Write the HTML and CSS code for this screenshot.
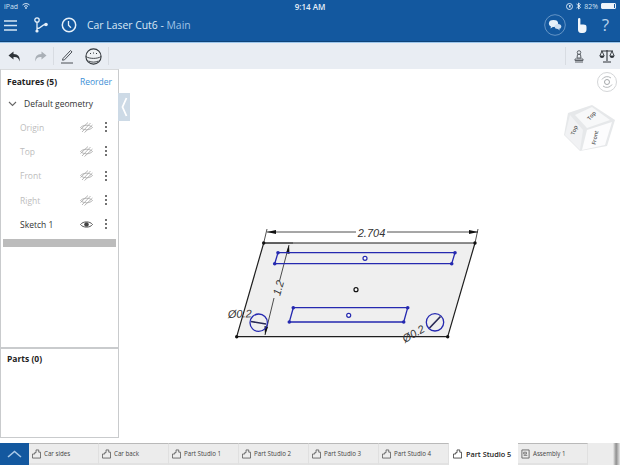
FILE: index.html
```html
<!DOCTYPE html>
<html lang="en">
<head>
<meta charset="utf-8">
<title>Car Laser Cut6 - Main</title>
<link rel="stylesheet" href="styles.css">
</head>
<body>
<div class="app">
  <header class="header">
    <div class="status">
      <div class="status-left">iPad
        <svg class="wifi" width="8" height="6" viewBox="0 0 8 6"><path d="M0.5 2a5 5 0 0 1 7 0M2 3.5a3 3 0 0 1 4 0" fill="none" stroke="#cfe0f2" stroke-width="1"/><circle cx="4" cy="5" r="0.9" fill="#cfe0f2"/></svg>
      </div>
      <div class="status-time">9:14 AM</div>
      <div class="status-right">
        <svg width="7" height="7" viewBox="0 0 7 7"><circle cx="3.5" cy="3.5" r="3" fill="none" stroke="#cfe0f2"/><rect x="3" y="2" width="1.6" height="2.5" fill="#cfe0f2"/></svg>
        <svg width="5" height="8" viewBox="0 0 5 8"><path d="M0.5 2l4 3.4L2.5 7V1l2 1.6L0.5 6" fill="none" stroke="#e2ecf6" stroke-width="0.9"/></svg>
        <span>82%</span>
        <span class="battery"><span class="battery-fill"></span></span>
      </div>
    </div>
    <div class="appbar">
      <svg class="ic-menu" width="13" height="11" viewBox="0 0 13 11"><path d="M0 1h13M0 5.5h13M0 10h13" stroke="#d6e6f5" stroke-width="1.5"/></svg>
      <svg class="ic-branch" width="14" height="16" viewBox="0 0 14 16"><circle cx="3" cy="3" r="2.2" fill="none" stroke="#e6f0f9" stroke-width="1.3"/><circle cx="3" cy="14" r="1.6" fill="#e6f0f9"/><circle cx="12" cy="7.5" r="1.8" fill="#e6f0f9"/><path d="M3 5v8M3 11.5c4 0 4.500-3.500 8-4" fill="none" stroke="#e6f0f9" stroke-width="1.3"/></svg>
      <svg class="ic-clock" width="16" height="16" viewBox="0 0 16 16"><circle cx="8" cy="8" r="6.700" fill="none" stroke="#e6f0f9" stroke-width="1.500"/><path d="M7.500 4v4.300l2.500 2.500" fill="none" stroke="#e6f0f9" stroke-width="1.300"/></svg>
      <div class="doc-title"><b>Car Laser Cut6 -</b> Main</div>
      <div class="appbar-right">
        <svg width="22" height="22" viewBox="0 0 22 22"><circle cx="11" cy="11" r="10.300" fill="none" stroke="#6d9bc9" stroke-width="0.900"/><ellipse cx="9.500" cy="9.500" rx="4.600" ry="3.400" fill="#e6f0f9"/><path d="M7 12l-0.500 2.500L9.500 12.500z" fill="#e6f0f9"/><ellipse cx="14" cy="12.500" rx="3.300" ry="2.500" fill="#cfe0f2"/><path d="M15 14.500l1 2-3-2z" fill="#cfe0f2"/></svg>
        <svg class="ic-hand" width="10" height="15" viewBox="0 0 10 15"><path d="M1 1.300a1.200 1.200 0 0 1 2.400 0V6.500h3c2 0 3.100 .7 3.100 2.500v2.500c0 2-1.300 3.500-3.500 3.500H4C2 15 1 13.500 1 11.500z" fill="#f1f6fb"/></svg>
        <span class="help">?</span>
      </div>
    </div>
  </header>

  <nav class="toolbar">
    <svg width="13" height="11" viewBox="0 0 13 11"><path d="M5.500 0.500L0.500 4.500l5 4V6c3.500-.3 5.500 1 6 4.500 1-4.500-1.500-7.500-6-7.500z" fill="#2e3338"/></svg>
    <svg class="tool-redo" width="13" height="11" viewBox="0 0 13 11"><path d="M7.500 0.500l5 4-5 4V6c-3.500-.3-5.500 1-6 4.500-1-4.500 1.500-7.500 6-7.500z" fill="#a9afb6"/></svg>
    <span class="tool-sep"></span>
    <svg class="tool-pencil" width="15" height="15" viewBox="0 0 15 15"><path d="M3 9.500L10.500 1.500l1.500 1.400L4.500 10.800 2.500 11.200zM1 14h12" fill="none" stroke="#4a4f55" stroke-width="1"/></svg>
    <svg class="tool-sphere" width="17" height="17" viewBox="0 0 17 17"><circle cx="8.500" cy="8.500" r="7.600" fill="#eef1f4" stroke="#33383d" stroke-width="1.100"/><path d="M1 8.500c3 2.500 12 2.500 15 0M3.500 13c3 1.500 7 1.500 10 0" fill="none" stroke="#33383d" stroke-width="0.900"/><path d="M5 5.500h1M8 5h1M11 5.500h1" stroke="#33383d" stroke-width="1"/></svg>
    <span class="tool-sep tool-sep-mid"></span>
    <span class="tool-sep tool-sep-last"></span>
    <svg class="tool-stamp" width="10" height="13" viewBox="0 0 10 13"><circle cx="5" cy="2.500" r="1.800" fill="none" stroke="#5c6167"/><path d="M3.500 4.500h3l.5 3.500H3z" fill="none" stroke="#5c6167"/><path d="M1 9h8v1.500H1zM1 12h8" fill="none" stroke="#5c6167"/></svg>
    <svg class="tool-scales" width="16" height="14" viewBox="0 0 16 14"><path d="M8 1v11M4 13h8M2 2h12" fill="none" stroke="#2e3338" stroke-width="1.100"/><path d="M3 2L0.800 7h4.400zM13 2l-2.200 5h4.400z" fill="none" stroke="#2e3338" stroke-width="0.900"/><path d="M0.800 7a2.200 2 0 0 0 4.400 0zM10.800 7a2.200 2 0 0 0 4.400 0z" fill="#2e3338"/></svg>
  </nav>

  <main class="workspace">
    <aside class="panel">
      <section class="features">
        <div class="features-head"><strong>Features (5)</strong><span class="reorder">Reorder</span></div>
        <div class="group"><svg width="9" height="6" viewBox="0 0 9 6"><path d="M1 1l3.500 3.500L8 1" fill="none" stroke="#666" stroke-width="1.100"/></svg><span>Default geometry</span></div>
        <div class="row muted"><span class="row-name">Origin</span><svg class="eye" width="13" height="11" viewBox="0 0 13 11"><path d="M0.500 5.500C3 2.500 10 2.500 12.500 5.500 10 8.500 3 8.500 0.500 5.500zM2 10L10.500 1M4.500 10.500L12.500 3M0.500 7.500L8 0.500" fill="none" stroke="#a5a5a5" stroke-width="0.800"/></svg><span class="dots"><i></i><i></i><i></i></span></div>
        <div class="row muted"><span class="row-name">Top</span><svg class="eye" width="13" height="11" viewBox="0 0 13 11"><path d="M0.500 5.500C3 2.500 10 2.500 12.500 5.500 10 8.500 3 8.500 0.500 5.500zM2 10L10.500 1M4.500 10.500L12.500 3M0.500 7.500L8 0.500" fill="none" stroke="#a5a5a5" stroke-width="0.800"/></svg><span class="dots"><i></i><i></i><i></i></span></div>
        <div class="row muted"><span class="row-name">Front</span><svg class="eye" width="13" height="11" viewBox="0 0 13 11"><path d="M0.500 5.500C3 2.500 10 2.500 12.500 5.500 10 8.500 3 8.500 0.500 5.500zM2 10L10.500 1M4.500 10.500L12.500 3M0.500 7.500L8 0.500" fill="none" stroke="#a5a5a5" stroke-width="0.800"/></svg><span class="dots"><i></i><i></i><i></i></span></div>
        <div class="row muted"><span class="row-name">Right</span><svg class="eye" width="13" height="11" viewBox="0 0 13 11"><path d="M0.500 5.500C3 2.500 10 2.500 12.500 5.500 10 8.500 3 8.500 0.500 5.500zM2 10L10.500 1M4.500 10.500L12.500 3M0.500 7.500L8 0.500" fill="none" stroke="#a5a5a5" stroke-width="0.800"/></svg><span class="dots"><i></i><i></i><i></i></span></div>
        <div class="row"><span class="row-name">Sketch 1</span><svg class="eye" width="13" height="11" viewBox="0 0 13 11"><path d="M0.500 5.500C3 2 10 2 12.500 5.500 10 9 3 9 0.500 5.500z" fill="none" stroke="#444" stroke-width="0.900"/><circle cx="6.500" cy="5.500" r="2.300" fill="#444"/></svg><span class="dots"><i></i><i></i><i></i></span></div>
        <div class="rollback"></div>
      </section>
      <section class="parts"><strong>Parts (0)</strong></section>
    </aside>

    <div class="canvas">
      <div class="collapse"><svg width="7" height="20" viewBox="0 0 7 20"><path d="M5.500 1L1.500 10l4 9" fill="none" stroke="#fff" stroke-width="1.800"/></svg></div>

      <svg class="rotate" width="22" height="22" viewBox="0 0 22 22"><circle cx="11" cy="11" r="9.500" fill="#fff" stroke="#d4d6d8" stroke-width="1"/><path d="M6 8.500a6 6 0 0 1 9-1.500M16 13.500a6 6 0 0 1-9 1.500" fill="none" stroke="#b5b8bb" stroke-width="1"/><circle cx="11" cy="11" r="2.500" fill="none" stroke="#a5a8ab" stroke-width="1"/></svg>

      <svg class="cube" width="52" height="50" viewBox="0 0 52 50">
        <path d="M4 10L28 2l23 15-8 26-27 5L0 32z" fill="#e6e8ea"/>
        <path d="M11 12L28 4l18 13-23 8z" fill="#f7f8f9"/>
        <path d="M6 12l13 15-3 20L1 32z" fill="#f1f2f4"/>
        <path d="M23 27l25-8-7 23-23 5z" fill="#fcfcfd"/>
        <text class="cube-text" transform="translate(29 14) rotate(-48)" text-anchor="middle">Top</text>
        <text class="cube-text" transform="translate(12 28) rotate(-68)" text-anchor="middle">Top</text>
        <text class="cube-text" transform="translate(33 35) rotate(-78)" text-anchor="middle">Front</text>
      </svg>

      <svg class="sketch" width="620" height="465" viewBox="0 0 620 465">
        <path class="plate" d="M263.700 243H475L447.700 336.700H236.700z"/>
        <g class="dim">
          <path d="M263.700 243L267 229M475 243L478 229M267 232H356M387 232H478"/>
          <path d="M289 245L279.500 281M274 298L265 335"/>
          <path d="M263.700 243H293"/>
        </g>
        <path class="arrow" d="M267 232l9-2v4zM478 232l-9-2v4zM289 245l.5 9-3.500-1zM265 335l-.5-9 3.500 1z"/>
        <text class="dim-text" x="371.500" y="236.500" text-anchor="middle">2.704</text>
        <text class="dim-text" transform="translate(282 289) rotate(-74)" text-anchor="middle">1.2</text>
        <text class="dim-text" transform="translate(228 318) rotate(-2)">Ø0.2</text>
        <text class="dim-text" transform="translate(405 343) rotate(-30)">Ø0.2</text>

        <path class="slot" d="M278 252.700H455L451.700 263.700H274.700z"/>
        <path class="slot" d="M293.300 307.700H407.700L403.700 322H289.300z"/>
        <g class="blue-dots">
          <circle cx="278" cy="252.700" r="1.800"/><circle cx="455" cy="252.700" r="1.800"/><circle cx="451.700" cy="263.700" r="1.800"/><circle cx="274.700" cy="263.700" r="1.800"/>
          <circle cx="293.300" cy="307.700" r="1.800"/><circle cx="407.700" cy="307.700" r="1.800"/><circle cx="403.700" cy="322" r="1.800"/><circle cx="289.300" cy="322" r="1.800"/>
        </g>
        <circle class="hole" cx="365" cy="258.300" r="2"/>
        <circle class="hole" cx="348.700" cy="315.300" r="2"/>
        <circle class="center" cx="356" cy="289.700" r="2"/>
        <circle class="round" cx="258.700" cy="322.700" r="8.700"/>
        <circle class="round" cx="435" cy="322.300" r="8.700"/>
        <path class="leader" d="M251 321.500L266 324M429.500 328L440.500 316.500"/>
        <g class="corners">
          <circle cx="263.700" cy="243" r="1.700"/><circle cx="475" cy="243" r="1.700"/><circle cx="447.700" cy="336.700" r="1.700"/><circle cx="236.700" cy="336.700" r="1.700"/>
        </g>
      </svg>
    </div>
  </main>

  <footer class="tabs">
    <div class="tabs-toggle"><svg width="15" height="8" viewBox="0 0 15 8"><path d="M1 7l6.500-5.500L14 7" fill="none" stroke="#a9c9e8" stroke-width="1.600"/></svg></div>
    <div class="tab"><svg class="ps" width="9" height="10" viewBox="0 0 10 10"><path d="M0.500 5h2.500V3.500h1.500V0.500H7.500V3h2V9.500H.5z" fill="none" stroke="#555" stroke-width="0.900"/></svg>Car sides</div>
    <div class="tab"><svg class="ps" width="9" height="10" viewBox="0 0 10 10"><path d="M0.500 5h2.500V3.500h1.500V0.500H7.500V3h2V9.500H.5z" fill="none" stroke="#555" stroke-width="0.900"/></svg>Car back</div>
    <div class="tab"><svg class="ps" width="9" height="10" viewBox="0 0 10 10"><path d="M0.500 5h2.500V3.500h1.500V0.500H7.500V3h2V9.500H.5z" fill="none" stroke="#555" stroke-width="0.900"/></svg>Part Studio 1</div>
    <div class="tab"><svg class="ps" width="9" height="10" viewBox="0 0 10 10"><path d="M0.500 5h2.500V3.500h1.500V0.500H7.500V3h2V9.500H.5z" fill="none" stroke="#555" stroke-width="0.900"/></svg>Part Studio 2</div>
    <div class="tab"><svg class="ps" width="9" height="10" viewBox="0 0 10 10"><path d="M0.500 5h2.500V3.500h1.500V0.500H7.500V3h2V9.500H.5z" fill="none" stroke="#555" stroke-width="0.900"/></svg>Part Studio 3</div>
    <div class="tab"><svg class="ps" width="9" height="10" viewBox="0 0 10 10"><path d="M0.500 5h2.500V3.500h1.500V0.500H7.500V3h2V9.500H.5z" fill="none" stroke="#555" stroke-width="0.900"/></svg>Part Studio 4</div>
    <div class="tab tab-active"><svg class="ps" width="9" height="10" viewBox="0 0 10 10"><path d="M0.500 5h2.500V3.500h1.500V0.500H7.500V3h2V9.500H.5z" fill="none" stroke="#333" stroke-width="0.900"/></svg>Part Studio 5</div>
    <div class="tab"><svg class="ps" width="9" height="10" viewBox="0 0 10 10"><path d="M1 0.500H9V9.500H1z" fill="none" stroke="#555" stroke-width="0.900"/><path d="M3 3h3v2H3zM3 6.500h4" fill="none" stroke="#555" stroke-width="0.800"/></svg>Assembly 1</div>
    <div class="tabs-fade"></div>
  </footer>
</div>
</body>
</html>
```

FILE: styles.css
```css
* { box-sizing: border-box; }
html, body { margin: 0; padding: 0; background: #fff; }
.app {
  width: 620px;
  height: 465px;
  display: flex;
  flex-direction: column;
  overflow: hidden;
  font-family: "Open Sans", "Noto Sans", sans-serif;
  color: #2b2b2b;
}
.header { height: 43px; background: #13589f; border-bottom: 1px solid #9cc6ec; flex: none; box-shadow: inset 0 -1px 0 #0e4479; }
.status {
  height: 12px;
  padding: 0 4px;
  display: grid;
  grid-template-columns: 1fr auto 1fr;
  align-items: center;
  font-size: 7px;
  color: #cfe0f2;
}
.status-left { display: flex; align-items: center; gap: 4px; }
.status-time { font-weight: 600; font-size: 8px; color: #e6f0f9; }
.status-right { display: flex; align-items: center; justify-content: flex-end; gap: 3px; }
.battery { width: 15px; height: 6px; border: 1px solid #e6f0f9; border-radius: 1px; display: block; padding: 0; }
.battery-fill { display: block; width: 12px; height: 4px; background: #eef4fa; }
.appbar { height: 30px; display: flex; align-items: center; padding: 0 0 4px 4px; }
.ic-branch { margin-left: 17px; }
.ic-clock { margin-left: 13px; }
.doc-title { margin-left: 10px; font-size: 10.400px; color: #9fc3e6; }
.doc-title b { font-weight: 500; color: #dbe9f6; }
.appbar-right { margin-left: auto; display: flex; align-items: center; padding-right: 11px; }
.ic-hand { margin-left: 11px; }
.help { margin-left: 15px; font-size: 17px; line-height: 20px; color: #b9d3ec; }

.toolbar { height: 26px; flex: none; background: #e9edf3; display: flex; align-items: center; padding-left: 8px; }
.tool-redo { margin-left: 13px; }
.tool-sep { width: 1px; height: 18px; background: #d8dce2; margin-left: 6px; }
.tool-pencil { margin-left: 6px; }
.tool-sphere { margin-left: 10px; }
.tool-sep.tool-sep-mid { margin-left: 6px; }
.tool-sep.tool-sep-last { margin-left: auto; margin-right: 0; }
.tool-stamp { margin-left: 8px; }
.tool-scales { margin-left: 15px; margin-right: 5px; }

.workspace { flex: 1; min-height: 0; display: flex; background: #fff; position: relative; }
.panel {
  width: 119px;
  flex: none;
  margin-bottom: 5px;
  border: 1px solid #c9cbcd;
  border-top-color: #d9dbdd;
  display: flex;
  flex-direction: column;
  background: #fff;
}
.features { flex: 1; border-bottom: 2px solid #c9cbcd; font-size: 8.500px; }
.features-head { display: flex; justify-content: space-between; align-items: center; height: 22px; padding: 0 6px 0 6px; }
.features-head strong { font-weight: 700; color: #222; }
.reorder { color: #3d8fd6; }
.group { height: 23px; display: flex; align-items: center; gap: 7px; padding-left: 7px; color: #333; }
.row { height: 24.300px; display: flex; align-items: center; padding-left: 19px; color: #333; }
.row.muted { color: #bdbdbd; }
.row-name { flex: 1; }
.eye { margin-right: 12px; }
.dots { width: 2px; margin-right: 11px; display: flex; flex-direction: column; gap: 2px; }
.dots i { display: block; width: 2px; height: 2px; background: #444; border-radius: 50%; }
.rollback { height: 8px; margin: 3px 2px 0 2px; background: #bcbcbc; }
.parts { height: 88px; padding: 4px 6px; font-size: 8.500px; flex: none; }
.parts strong { font-weight: 700; color: #222; }

.canvas { flex: 1; position: relative; }
.collapse {
  position: absolute; left: -1px; top: 24px;
  width: 12px; height: 28px;
  background: #cddae6;
  display: flex; align-items: center; justify-content: center;
}
.rotate { position: absolute; right: 2px; top: 2px; }
.cube { position: absolute; right: 4px; top: 34px; }
.cube-text { font-size: 5.500px; fill: #555; font-weight: 600; }
.sketch { position: absolute; left: -119px; top: -69px; pointer-events: none; }
.plate { fill: #efefef; stroke: #1f1f1f; stroke-width: 1.200; }
.dim { fill: none; stroke: #222; stroke-width: 0.800; }
.arrow { fill: #111; }
.dim-text { font-family: "Liberation Sans", sans-serif; font-style: italic; font-size: 11px; fill: #333; }
.slot { fill: none; stroke: #2529b0; stroke-width: 1.300; }
.blue-dots circle { fill: #2529b0; }
.hole { fill: #fff; stroke: #2529b0; stroke-width: 1.200; }
.center { fill: #fff; stroke: #111; stroke-width: 1.200; }
.round { fill: none; stroke: #2529b0; stroke-width: 1.300; }
.leader { stroke: #2a2a55; stroke-width: 1.700; fill: none; }
.corners circle { fill: #111; }

.tabs {
  height: 22px;
  flex: none;
  display: flex;
  background: #ececec;
  font-size: 6.200px;
  color: #444;
}
.tabs-toggle { width: 29px; background: #13589f; display: flex; align-items: center; justify-content: center; }
.tab {
  width: 70px;
  display: flex;
  align-items: center;
  gap: 3px;
  padding-left: 3px;
  background: #ececec;
  border-top: 1px solid #b9b9b9;
  border-right: 1px solid #e0e0e0;
  border-bottom: 2px solid #e2e2e2;
  white-space: nowrap;
}
.tab-active {
  width: 69px;
  background: #fff;
  border-top: 0;
  border-right: 0;
  border-bottom: 0;
  font-weight: 600;
  font-size: 7.300px;
  color: #222;
  padding-left: 4px;
  gap: 4px;
}
.tabs-fade { flex: 1; background: linear-gradient(90deg, #ececec 0 78%, #8f8f8f 88%, #e6e6e6 100%); }
```
